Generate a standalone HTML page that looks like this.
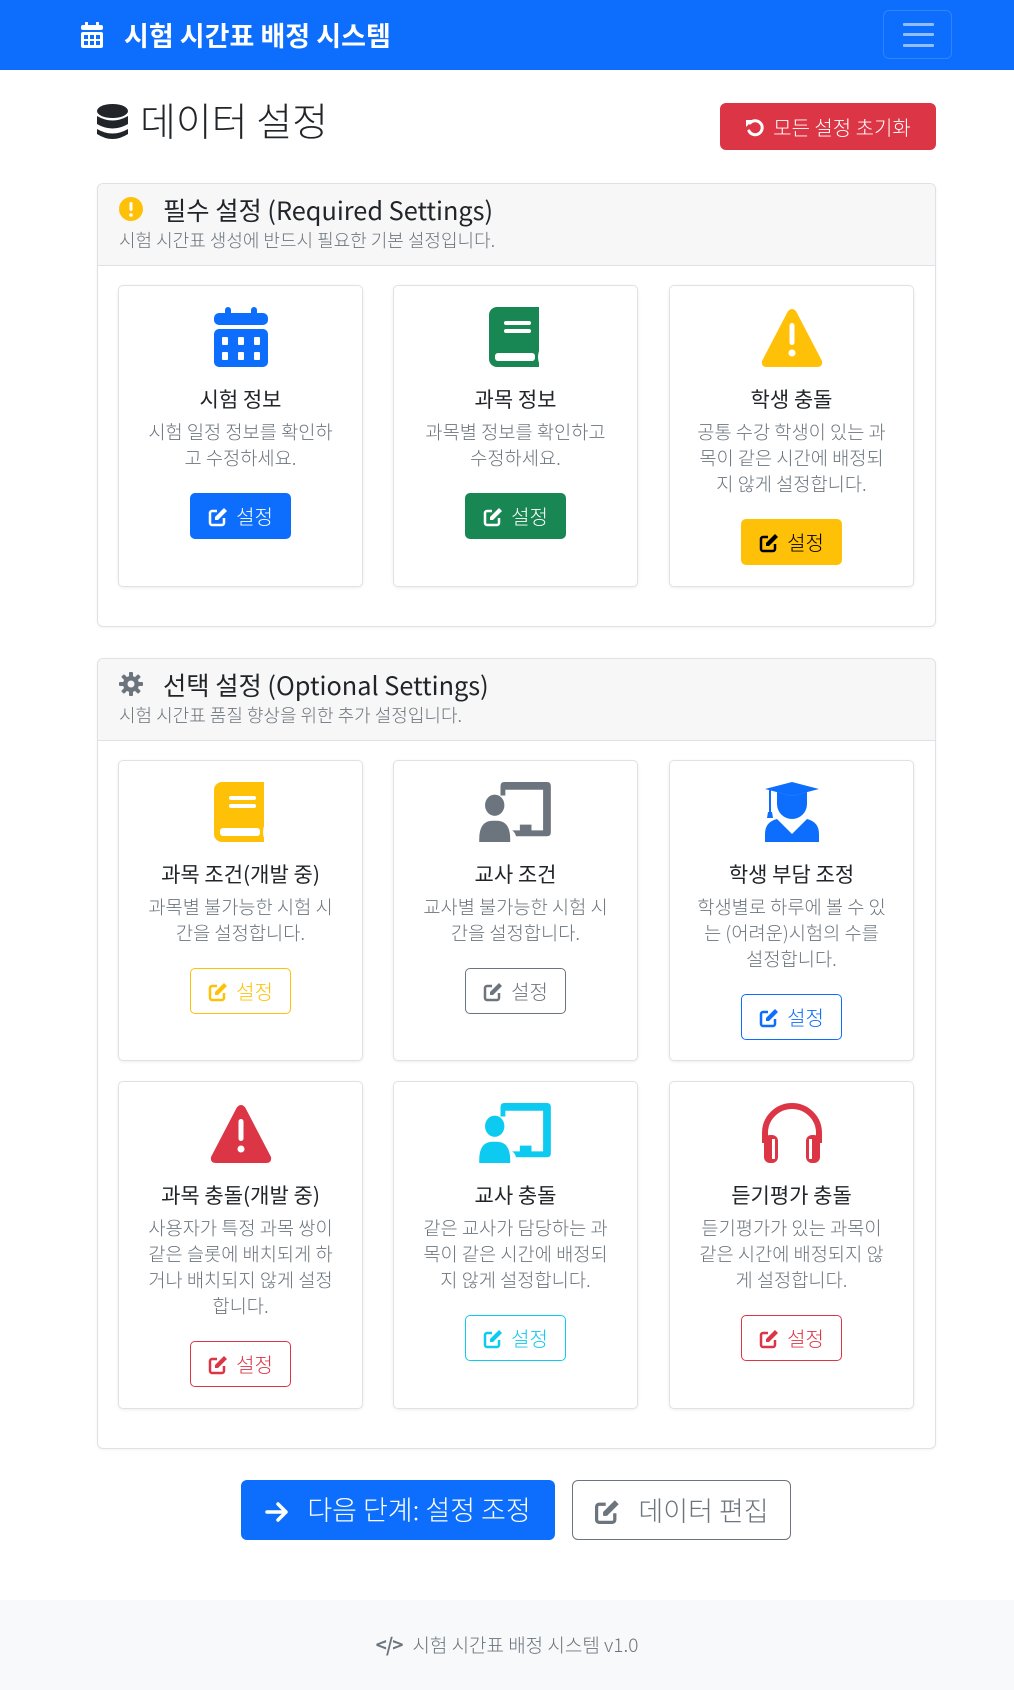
<!DOCTYPE html>
<html><head><meta charset="utf-8"><style>
*{box-sizing:border-box;margin:0;padding:0}
body{width:1014px;height:1690px;position:relative;background:#fff;font-family:"Noto Sans CJK KR","Liberation Sans",sans-serif;color:#212529;overflow:hidden;font-weight:300}
.abs{position:absolute}
.nav{left:0;top:0;width:1014px;height:70px;background:#0d6efd}
.brand{left:124px;top:17px;color:#fff;font-size:27px;font-weight:bold;line-height:36px;white-space:nowrap}
.tog{left:883px;top:10px;width:69px;height:49px;border:1px solid rgba(255,255,255,.15);border-radius:6px}
.tog i{position:absolute;left:19px;width:31px;height:2.5px;background:rgba(255,255,255,.55);border-radius:1px}
.title{left:140px;top:95px;font-size:39px;line-height:50px;white-space:nowrap}
.reset{left:720px;top:103px;width:216px;height:47px;background:#dc3545;border-radius:6px;color:#fff;font-size:20px;line-height:47px;text-align:center;white-space:nowrap}
.sec{left:97px;width:839px;border:1px solid #dee2e6;border-radius:6px;box-shadow:0 1px 3px rgba(0,0,0,.05)}
.hd{position:absolute;left:0;top:0;width:100%;height:82px;background:#f7f7f7;border-bottom:1px solid #dee2e6;border-radius:6px 6px 0 0}
.hd h4{position:absolute;left:65px;top:9px;font-size:25.3px;font-weight:normal;line-height:34px;white-space:nowrap}
.hd p{position:absolute;left:21px;top:43px;font-size:18px;color:#6c757d;line-height:26px;white-space:nowrap}
.hd svg{position:absolute;left:21px;top:13px}
.card{position:absolute;width:245px;border:1px solid #dee2e6;border-radius:5px;box-shadow:0 1px 3px rgba(0,0,0,.07);text-align:center;padding-top:21px}
.card svg.ic{display:block;margin:0 auto;height:60px}
.card h5{margin-top:19px;font-size:21px;font-weight:normal;line-height:26px;white-space:nowrap}
.card p{margin-top:7px;font-size:18.7px;color:#6c757d;line-height:26px;white-space:nowrap}
.btn{display:inline-block;margin-top:22px;width:101px;height:46px;border-radius:5px;font-size:20px;line-height:44px;border:1px solid transparent;white-space:nowrap}
.btn svg{vertical-align:-3px;margin-right:8px}
.big{top:1480px;height:60px;border-radius:6px;font-size:27px;line-height:58px;text-align:center;white-space:nowrap}
.foot{left:0;top:1600px;width:1014px;height:90px;background:#f8f9fa;text-align:center;color:#6c757d;font-size:19px;line-height:90px}
</style></head><body>
<div class="abs nav"></div>
<svg class="abs" style="left:81px;top:22px" width="22" height="26" viewBox="0 0 22 26"><rect x="4" y="0" width="3" height="5" fill="#fff"/><rect x="15" y="0" width="3" height="5" fill="#fff"/><rect x="0" y="3" width="22" height="5" rx="2" fill="#fff"/><rect x="0" y="10" width="22" height="16" rx="2" fill="#fff"/><g fill="#0d6efd"><rect x="3" y="13" width="4" height="4"/><rect x="9" y="13" width="4" height="4"/><rect x="15" y="13" width="4" height="4"/><rect x="3" y="19" width="4" height="4"/><rect x="9" y="19" width="4" height="4"/><rect x="15" y="19" width="4" height="4"/></g></svg>
<div class="abs brand">시험 시간표 배정 시스템</div>
<div class="abs tog"><i style="top:12px"></i><i style="top:22px"></i><i style="top:33px"></i></div>

<svg class="abs" style="left:97px;top:104px" width="31" height="37" viewBox="0 0 31 37"><g fill="#212529"><ellipse cx="15.5" cy="7" rx="15.5" ry="7"/><path d="M0 12 Q15.5 21 31 12 V20 Q15.5 29 0 20Z"/><path d="M0 25 Q15.5 34 31 25 V30 Q15.5 40 0 30Z"/></g></svg>
<div class="abs title">데이터 설정</div>
<div class="abs reset"><svg width="20" height="20" viewBox="0 0 20 20" style="vertical-align:-3px;margin-right:8px"><path d="M5 5 A7 7 0 1 1 4 13" fill="none" stroke="#fff" stroke-width="3" stroke-linecap="round"/><path d="M1 2 L8 2 L1 9Z" fill="#fff"/></svg>모든 설정 초기화</div>

<div class="abs sec" style="top:183px;height:444px">
<div class="hd"><svg width="24" height="24" viewBox="0 0 24 24"><circle cx="12" cy="12" r="12" fill="#ffc107"/><rect x="10.5" y="5" width="3" height="9" rx="1.5" fill="#fff"/><circle cx="12" cy="18" r="1.8" fill="#fff"/></svg><h4>필수 설정 (Required Settings)</h4><p>시험 시간표 생성에 반드시 필요한 기본 설정입니다.</p></div>
</div>
<div class="card" style="left:118px;top:285px;height:302px">
<svg class="ic" width="54" viewBox="0 0 54 60"><rect x="11" y="0" width="6" height="10" rx="3" fill="#0d6efd"/><rect x="37" y="0" width="6" height="10" rx="3" fill="#0d6efd"/><rect x="0" y="6" width="54" height="12" rx="5" fill="#0d6efd"/><rect x="0" y="22" width="54" height="38" rx="5" fill="#0d6efd"/><g fill="#fff"><rect x="8" y="30" width="6" height="8" rx="1"/><rect x="24" y="30" width="6" height="8" rx="1"/><rect x="40" y="30" width="6" height="8" rx="1"/><rect x="8" y="45" width="6" height="8" rx="1"/><rect x="24" y="45" width="6" height="8" rx="1"/><rect x="40" y="45" width="6" height="8" rx="1"/></g></svg>
<h5>시험 정보</h5><p>시험 일정 정보를 확인하<br>고 수정하세요.</p>
<span class="btn" style="background:#0d6efd;color:#fff"><svg width="20" height="20" viewBox="0 0 20 20"><path d="M9 4H4a2 2 0 0 0-2 2v10a2 2 0 0 0 2 2h10a2 2 0 0 0 2-2v-5" fill="none" stroke="#fff" stroke-width="2.5"/><path d="M16 1l3 3-9 9H7v-3z" fill="#fff"/></svg>설정</span></div>
<div class="card" style="left:393px;top:285px;height:302px">
<svg class="ic" width="54" viewBox="0 0 54 60"><path d="M8 0H50V44Q48 50 50 56V60H8A8 8 0 0 1 0 52V8A8 8 0 0 1 8 0Z" fill="#198754"/><rect x="6" y="46" width="40" height="8" rx="3" fill="#fff"/><rect x="15" y="14" width="27" height="4" rx="2" fill="#fff"/><rect x="15" y="22" width="27" height="4" rx="2" fill="#fff"/></svg>
<h5>과목 정보</h5><p>과목별 정보를 확인하고<br>수정하세요.</p>
<span class="btn" style="background:#198754;color:#fff"><svg width="20" height="20" viewBox="0 0 20 20"><path d="M9 4H4a2 2 0 0 0-2 2v10a2 2 0 0 0 2 2h10a2 2 0 0 0 2-2v-5" fill="none" stroke="#fff" stroke-width="2.5"/><path d="M16 1l3 3-9 9H7v-3z" fill="#fff"/></svg>설정</span></div>
<div class="card" style="left:669px;top:285px;height:302px">
<svg class="ic" width="62" viewBox="0 0 62 60"><path d="M31 2 Q34 2 36 6 L61 54 Q62 60 56 60 H6 Q0 60 1 54 L26 6 Q28 2 31 2Z" fill="#ffc107"/><rect x="28.5" y="16" width="5" height="22" rx="2.5" fill="#fff"/><circle cx="31" cy="46" r="3.5" fill="#fff"/></svg>
<h5>학생 충돌</h5><p>공통 수강 학생이 있는 과<br>목이 같은 시간에 배정되<br>지 않게 설정합니다.</p>
<span class="btn" style="background:#ffc107;color:#000"><svg width="20" height="20" viewBox="0 0 20 20"><path d="M9 4H4a2 2 0 0 0-2 2v10a2 2 0 0 0 2 2h10a2 2 0 0 0 2-2v-5" fill="none" stroke="#000" stroke-width="2.5"/><path d="M16 1l3 3-9 9H7v-3z" fill="#000"/></svg>설정</span></div>

<div class="abs sec" style="top:658px;height:791px">
<div class="hd"><svg width="24" height="24" viewBox="0 0 24 24"><g fill="#6c757d"><circle cx="12" cy="12" r="8"/><rect x="10" y="0" width="4" height="24" rx="1"/><rect x="0" y="10" width="24" height="4" rx="1"/><rect x="10" y="0" width="4" height="24" rx="1" transform="rotate(45 12 12)"/><rect x="10" y="0" width="4" height="24" rx="1" transform="rotate(-45 12 12)"/></g><circle cx="12" cy="12" r="3.5" fill="#f7f7f7"/></svg><h4>선택 설정 (Optional Settings)</h4><p>시험 시간표 품질 향상을 위한 추가 설정입니다.</p></div>
</div>
<div class="card" style="left:118px;top:760px;height:301px">
<svg class="ic" width="54" viewBox="0 0 54 60"><path d="M8 0H50V44Q48 50 50 56V60H8A8 8 0 0 1 0 52V8A8 8 0 0 1 8 0Z" fill="#ffc107"/><rect x="6" y="46" width="40" height="8" rx="3" fill="#fff"/><rect x="15" y="14" width="27" height="4" rx="2" fill="#fff"/><rect x="15" y="22" width="27" height="4" rx="2" fill="#fff"/></svg>
<h5>과목 조건(개발 중)</h5><p>과목별 불가능한 시험 시<br>간을 설정합니다.</p>
<span class="btn" style="border-color:#ffc107;color:#ffc107"><svg width="20" height="20" viewBox="0 0 20 20"><path d="M9 4H4a2 2 0 0 0-2 2v10a2 2 0 0 0 2 2h10a2 2 0 0 0 2-2v-5" fill="none" stroke="#ffc107" stroke-width="2.5"/><path d="M16 1l3 3-9 9H7v-3z" fill="#ffc107"/></svg>설정</span></div>
<div class="card" style="left:393px;top:760px;height:301px">
<svg class="ic" width="76" viewBox="0 0 76 62"><path d="M22 14V4Q22 0 26 0H70Q74 0 74 4V52Q74 56 70 56H38Q37 52 34 50H42V44H54V50H66V8H27V14Z" fill="#6c757d"/><ellipse cx="16" cy="24" rx="10" ry="11" fill="#6c757d"/><path d="M0 59Q0 40 14 40H18Q32 40 32 59V62H0Z" fill="#6c757d"/></svg>
<h5>교사 조건</h5><p>교사별 불가능한 시험 시<br>간을 설정합니다.</p>
<span class="btn" style="border-color:#6c757d;color:#6c757d"><svg width="20" height="20" viewBox="0 0 20 20"><path d="M9 4H4a2 2 0 0 0-2 2v10a2 2 0 0 0 2 2h10a2 2 0 0 0 2-2v-5" fill="none" stroke="#6c757d" stroke-width="2.5"/><path d="M16 1l3 3-9 9H7v-3z" fill="#6c757d"/></svg>설정</span></div>
<div class="card" style="left:669px;top:760px;height:301px">
<svg class="ic" width="54" viewBox="0 0 54 60"><path d="M27 0L54 7L27 14L0 7Z" fill="#0d6efd"/><path d="M12 10V22A15 15 0 0 0 42 22V10L27 14Z" fill="#0d6efd"/><rect x="4" y="8" width="2" height="22" fill="#0d6efd"/><path d="M3 30H7L8 36H2Z" fill="#0d6efd"/><path d="M0 60V52Q0 40 12 37L27 52L42 37Q54 40 54 52V60Z" fill="#0d6efd"/></svg>
<h5>학생 부담 조정</h5><p>학생별로 하루에 볼 수 있<br>는 (어려운)시험의 수를<br>설정합니다.</p>
<span class="btn" style="border-color:#0d6efd;color:#0d6efd"><svg width="20" height="20" viewBox="0 0 20 20"><path d="M9 4H4a2 2 0 0 0-2 2v10a2 2 0 0 0 2 2h10a2 2 0 0 0 2-2v-5" fill="none" stroke="#0d6efd" stroke-width="2.5"/><path d="M16 1l3 3-9 9H7v-3z" fill="#0d6efd"/></svg>설정</span></div>

<div class="card" style="left:118px;top:1081px;height:328px">
<svg class="ic" width="62" viewBox="0 0 62 60"><path d="M31 2 Q34 2 36 6 L61 54 Q62 60 56 60 H6 Q0 60 1 54 L26 6 Q28 2 31 2Z" fill="#dc3545"/><rect x="28.5" y="16" width="5" height="22" rx="2.5" fill="#fff"/><circle cx="31" cy="46" r="3.5" fill="#fff"/></svg>
<h5>과목 충돌(개발 중)</h5><p>사용자가 특정 과목 쌍이<br>같은 슬롯에 배치되게 하<br>거나 배치되지 않게 설정<br>합니다.</p>
<span class="btn" style="border-color:#dc3545;color:#dc3545"><svg width="20" height="20" viewBox="0 0 20 20"><path d="M9 4H4a2 2 0 0 0-2 2v10a2 2 0 0 0 2 2h10a2 2 0 0 0 2-2v-5" fill="none" stroke="#dc3545" stroke-width="2.5"/><path d="M16 1l3 3-9 9H7v-3z" fill="#dc3545"/></svg>설정</span></div>
<div class="card" style="left:393px;top:1081px;height:328px">
<svg class="ic" width="76" viewBox="0 0 76 62"><path d="M22 14V4Q22 0 26 0H70Q74 0 74 4V52Q74 56 70 56H38Q37 52 34 50H42V44H54V50H66V8H27V14Z" fill="#0dcaf0"/><ellipse cx="16" cy="24" rx="10" ry="11" fill="#0dcaf0"/><path d="M0 59Q0 40 14 40H18Q32 40 32 59V62H0Z" fill="#0dcaf0"/></svg>
<h5>교사 충돌</h5><p>같은 교사가 담당하는 과<br>목이 같은 시간에 배정되<br>지 않게 설정합니다.</p>
<span class="btn" style="border-color:#0dcaf0;color:#0dcaf0"><svg width="20" height="20" viewBox="0 0 20 20"><path d="M9 4H4a2 2 0 0 0-2 2v10a2 2 0 0 0 2 2h10a2 2 0 0 0 2-2v-5" fill="none" stroke="#0dcaf0" stroke-width="2.5"/><path d="M16 1l3 3-9 9H7v-3z" fill="#0dcaf0"/></svg>설정</span></div>
<div class="card" style="left:669px;top:1081px;height:328px">
<svg class="ic" width="62" viewBox="0 0 62 60"><path d="M4 40V30A27 27 0 0 1 58 30V40" fill="none" stroke="#dc3545" stroke-width="6"/><rect x="3" y="32" width="14" height="28" rx="6" fill="#dc3545"/><rect x="45" y="32" width="14" height="28" rx="6" fill="#dc3545"/><rect x="11" y="36" width="3" height="20" fill="#fff"/><rect x="48" y="36" width="3" height="20" fill="#fff"/></svg>
<h5>듣기평가 충돌</h5><p>듣기평가가 있는 과목이<br>같은 시간에 배정되지 않<br>게 설정합니다.</p>
<span class="btn" style="border-color:#dc3545;color:#dc3545"><svg width="20" height="20" viewBox="0 0 20 20"><path d="M9 4H4a2 2 0 0 0-2 2v10a2 2 0 0 0 2 2h10a2 2 0 0 0 2-2v-5" fill="none" stroke="#dc3545" stroke-width="2.5"/><path d="M16 1l3 3-9 9H7v-3z" fill="#dc3545"/></svg>설정</span></div>

<div class="abs big" style="left:241px;width:314px;background:#0d6efd;color:#fff"><svg width="24" height="22" viewBox="0 0 24 22" style="vertical-align:-3px;margin-right:18px"><path d="M2 11H21M13 3L21 11L13 19" fill="none" stroke="#fff" stroke-width="3.5" stroke-linecap="round" stroke-linejoin="round"/></svg>다음 단계: 설정 조정</div>
<div class="abs big" style="left:572px;width:219px;border:1px solid #6c757d;color:#6c757d"><svg width="26" height="26" viewBox="0 0 20 20" style="vertical-align:-4px;margin-right:18px"><path d="M9 4H4a2 2 0 0 0-2 2v10a2 2 0 0 0 2 2h10a2 2 0 0 0 2-2v-5" fill="none" stroke="#6c757d" stroke-width="2.5"/><path d="M16 1l3 3-9 9H7v-3z" fill="#6c757d"/></svg>데이터 편집</div>

<div class="abs foot"><span style="font-weight:bold;letter-spacing:-1px;margin-right:10px">&lt;/&gt;</span>시험 시간표 배정 시스템 v1.0</div>
</body></html>
